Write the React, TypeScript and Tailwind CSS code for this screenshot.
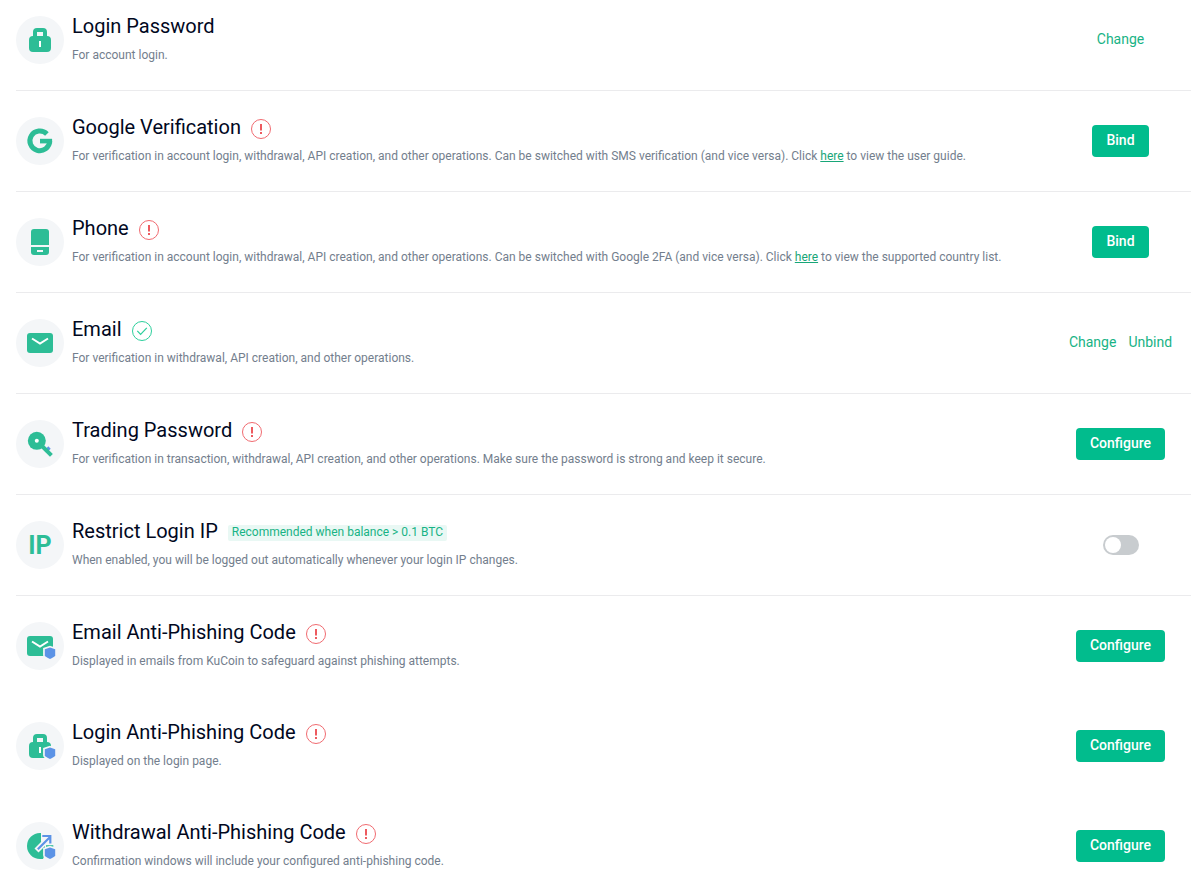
import React, { useState } from 'react';

type Status = 'warning' | 'ok';

interface SecurityItem {
  id: string;
  title: string;
  description: React.ReactNode;
  icon: React.ReactNode;
  status?: Status;
  tag?: string;
  links?: string[];
  button?: string;
  toggle?: boolean;
  divider?: boolean;
}

const Shield = () => (
  <path d="M34 25.6l5.2 1.6v6c0 1.1-2.3 2.6-5.2 3.7-2.9-1.1-5.2-2.6-5.2-3.7v-6z" fill="#5c93e6" stroke="#f4f6f8" strokeWidth="3.4" paintOrder="stroke" />
);

const LockShape = () => (
  <>
    <path d="M17 20v-4a4 4 0 0 1 4-4h6a4 4 0 0 1 4 4v4a4 4 0 0 1 4 4v8a4 4 0 0 1-4 4H17a4 4 0 0 1-4-4v-8a4 4 0 0 1 4-4zm4 0h6v-4h-6z" fill="#2dbd96" fillRule="evenodd" />
    <path d="M23 25h2v6h-2z" fill="#fff" />
  </>
);

const MailShape = () => (
  <>
    <rect x="11" y="14" width="26" height="20" rx="3" fill="#2dbd96" />
    <path d="M16 19.5l8 5 8-5" fill="none" stroke="#fff" strokeWidth="2" />
  </>
);

const Svg: React.FC<{ children: React.ReactNode }> = ({ children }) => (
  <svg viewBox="0 0 48 48" className="w-12 h-12" aria-hidden="true">{children}</svg>
);

const GoogleIcon = () => (
  <Svg>
    <path d="M30.9 16.9A9.9 9.9 0 1 0 33.7 24" fill="none" stroke="#2dbd96" strokeWidth="5" />
    <path d="M24 21.8h12.1v4.6H24z" fill="#2dbd96" />
  </Svg>
);

const PhoneIcon = () => (
  <Svg>
    <path d="M15 27V14a3 3 0 0 1 3-3h12a3 3 0 0 1 3 3v13z" fill="#2dbd96" />
    <path d="M15 29h18v5a3 3 0 0 1-3 3H18a3 3 0 0 1-3-3zM21 32v2h6v-2z" fill="#2dbd96" fillRule="evenodd" />
  </Svg>
);

const KeyIcon = () => (
  <Svg>
    <path d="M31.5 29.5l2-2" stroke="#5c93e6" strokeWidth="3.4" />
    <path d="M26 26l9.4 9.4" stroke="#2dbd96" strokeWidth="4" />
    <circle cx="20.8" cy="20.8" r="9" fill="#2dbd96" />
    <circle cx="20.8" cy="20.8" r="2" fill="#fff" />
  </Svg>
);

const WithdrawIcon = () => (
  <Svg>
    <path d="M25 11h-1a13 13 0 0 0 0 26h3l2-5v-8.5l-4-4z" fill="#2dbd96" />
    <path d="M20.5 28.5L34 15" stroke="#f4f6f8" strokeWidth="5.6" />
    <path d="M30 24h7.3" stroke="#2dbd96" strokeWidth="1.6" />
    <path d="M21.8 27.2l12-12M26.3 14h8v7.6" fill="none" stroke="#5c93e6" strokeWidth="2.2" />
    <Shield />
  </Svg>
);

const StatusIcon: React.FC<{ status: Status }> = ({ status }) => {
  if (status === 'ok') {
    return (
      <svg viewBox="0 0 20 20" className="w-5 h-5 mt-0.5 ml-2.5 shrink-0" role="img" aria-label="Enabled" fill="none" stroke="#2dcf9c">
        <circle cx="10" cy="10" r="9.5" />
        <path d="M5.3 9.8l3.3 3.6 6.2-6.6" strokeWidth="1.2" />
      </svg>
    );
  }
  return (
    <svg viewBox="0 0 20 20" className="w-5 h-5 mt-0.5 ml-2.5 shrink-0" role="img" aria-label="Not set">
      <circle cx="10" cy="10" r="9.5" fill="none" stroke="#f06a70" />
      <path d="M9 5h2v6.5H9zM9 13h2v2H9z" fill="#ed5a5f" />
    </svg>
  );
};

const items: SecurityItem[] = [
  {
    id: 'login-password',
    title: 'Login Password',
    description: 'For account login.',
    icon: <Svg><LockShape /></Svg>,
    links: ['Change'],
    divider: true,
  },
  {
    id: 'google',
    title: 'Google Verification',
    description: (
      <>
        For verification in account login, withdrawal, API creation, and other operations. Can be switched with SMS verification (and vice versa). Click{' '}
        <a href="#guide" className="text-[#18a678] underline">here</a> to view the user guide.
      </>
    ),
    icon: <GoogleIcon />,
    status: 'warning',
    button: 'Bind',
    divider: true,
  },
  {
    id: 'phone',
    title: 'Phone',
    description: (
      <>
        For verification in account login, withdrawal, API creation, and other operations. Can be switched with Google 2FA (and vice versa). Click{' '}
        <a href="#countries" className="text-[#18a678] underline">here</a> to view the supported country list.
      </>
    ),
    icon: <PhoneIcon />,
    status: 'warning',
    button: 'Bind',
    divider: true,
  },
  {
    id: 'email',
    title: 'Email',
    description: 'For verification in withdrawal, API creation, and other operations.',
    icon: <Svg><MailShape /></Svg>,
    status: 'ok',
    links: ['Change', 'Unbind'],
    divider: true,
  },
  {
    id: 'trading-password',
    title: 'Trading Password',
    description: 'For verification in transaction, withdrawal, API creation, and other operations. Make sure the password is strong and keep it secure.',
    icon: <KeyIcon />,
    status: 'warning',
    button: 'Configure',
    divider: true,
  },
  {
    id: 'restrict-ip',
    title: 'Restrict Login IP',
    description: 'When enabled, you will be logged out automatically whenever your login IP changes.',
    icon: <span className="text-[25px] leading-none font-bold text-[#2dbd96]">IP</span>,
    tag: 'Recommended when balance > 0.1 BTC',
    toggle: true,
    divider: true,
  },
  {
    id: 'email-code',
    title: 'Email Anti-Phishing Code',
    description: 'Displayed in emails from KuCoin to safeguard against phishing attempts.',
    icon: <Svg><MailShape /><Shield /></Svg>,
    status: 'warning',
    button: 'Configure',
  },
  {
    id: 'login-code',
    title: 'Login Anti-Phishing Code',
    description: 'Displayed on the login page.',
    icon: <Svg><LockShape /><Shield /></Svg>,
    status: 'warning',
    button: 'Configure',
  },
  {
    id: 'withdrawal-code',
    title: 'Withdrawal Anti-Phishing Code',
    description: 'Confirmation windows will include your configured anti-phishing code.',
    icon: <WithdrawIcon />,
    status: 'warning',
    button: 'Configure',
  },
];

const SecurityRow: React.FC<{ item: SecurityItem }> = ({ item }) => {
  const [enabled, setEnabled] = useState(false);

  return (
    <li className={`flex items-center py-[26px] ${item.divider ? 'border-b border-[#ebebed]' : ''}`}>
      <div className="w-12 h-12 shrink-0 rounded-full bg-[#f4f6f8] flex items-center justify-center">
        {item.icon}
      </div>

      <div className="flex-1 min-w-0 ml-2">
        <div className="flex items-start min-h-6">
          <h3 className="text-xl leading-5 text-[#01081e]">
            {item.toggle ? <label htmlFor={item.id}>{item.title}</label> : item.title}
          </h3>
          {item.status && <StatusIcon status={item.status} />}
          {item.tag && (
            <span className="mt-1 ml-2.5 px-1 pb-0.5 rounded-xs bg-[#e9f8f4] text-xs leading-[14px] text-[#18b385]">{item.tag}</span>
          )}
        </div>
        <p className="mt-1.5 text-xs leading-[18px] text-[#737e8d]">{item.description}</p>
      </div>

      <div className="w-[12%] shrink-0 flex items-center justify-center gap-3">
        {item.links?.map((link) => (
          <a key={link} href={`#${item.id}`} className="pb-0.5 text-sm text-[#18b385]">{link}</a>
        ))}
        {item.button && (
          <button type="button" className="h-8 px-3.5 pb-0.5 rounded-sm bg-[#01bc8d] text-sm font-medium text-white">
            {item.button}
          </button>
        )}
        {item.toggle && (
          <input
            id={item.id}
            type="checkbox"
            role="switch"
            checked={enabled}
            onChange={(e) => setEnabled(e.target.checked)}
            className="appearance-none w-9 h-5 p-0.5 rounded-full bg-[#c8cccf] checked:bg-[#01bc8d] cursor-pointer before:block before:w-4 before:h-4 before:rounded-full before:bg-white before:transition-transform checked:before:translate-x-4"
          />
        )}
      </div>
    </li>
  );
};

export default function App() {
  return (
    <main className="min-h-screen bg-white pl-4 font-[Roboto,sans-serif]">
      <ul className="-mt-2.5">
        {items.map((item) => <SecurityRow key={item.id} item={item} />)}
      </ul>
    </main>
  );
}
